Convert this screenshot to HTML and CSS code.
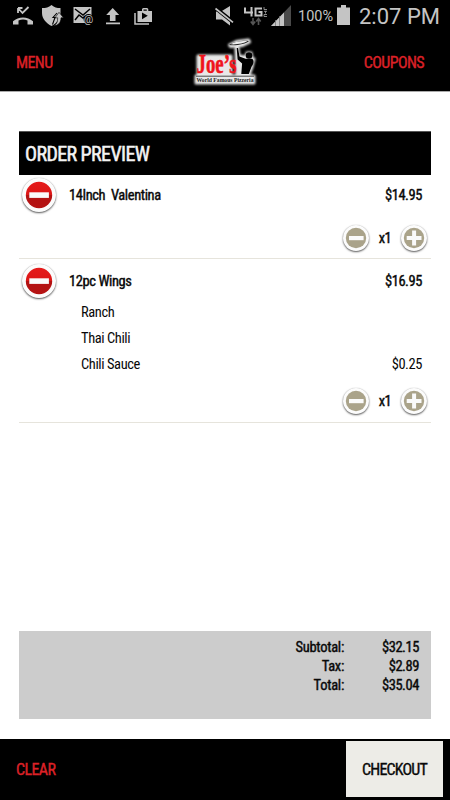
FILE: index.html
```html
<!DOCTYPE html>
<html lang="en">
<head>
<meta charset="utf-8">
<title>Joe's Order Preview</title>
<link rel="stylesheet" href="styles.css">
</head>
<body>
<svg class="defs" width="0" height="0">
  <defs>
    <linearGradient id="red" x1="0" y1="0" x2="0" y2="1">
      <stop offset="0" stop-color="#e51b1b"/><stop offset=".5" stop-color="#dc1616"/>
      <stop offset=".5" stop-color="#b31212"/><stop offset="1" stop-color="#b51212"/>
    </linearGradient>
    <symbol id="remove" viewBox="0 0 34 34">
      <circle cx="17" cy="17" r="13.2" fill="url(#red)"/>
      <rect x="7.3" y="14.3" width="19.6" height="5.6" fill="#fafafa"/>
    </symbol>
    <symbol id="minus" viewBox="0 0 26 26">
      <circle cx="13" cy="13" r="10.2" fill="#aaa38a"/>
      <rect x="6" y="11" width="14.6" height="4.2" fill="#fafafa"/>
    </symbol>
    <symbol id="plus" viewBox="0 0 26 26">
      <circle cx="13" cy="13" r="10.2" fill="#aaa38a"/>
      <path d="M11.1 5.5h4v5.6h5.4v4h-5.4v5.5h-4v-5.5H5.7v-4h5.4z" fill="#fafafa"/>
    </symbol>
  </defs>
</svg>

<div class="status">
  <svg class="status-left" width="160" height="32" viewBox="0 0 160 32" fill="#c4c4c4">
    <path d="M13 24.500v-3.200c5.500-5.200 14.500-5.200 20 0v3.200h-5.500v-4c-3-1.300-6-1.300-9 0v4z"/>
    <path d="M18 13V8m0 0h4.500M18 8l4.500 5 6-6" fill="none" stroke="#c4c4c4" stroke-width="1.800"/>
    <path d="M51.500 5c3 2.500 5 3 9 3v5c0 6-4 10.500-9 13-5-2.500-9.500-7-9.500-13V8c4 0 6.500-.5 9.500-3z"/>
    <path d="M53 25.800c3.500-1 4.700-3.500 4.700-8h-2.700l4-5.500 4.500 5.500h-2.500c0 5-3 8-8 8z" stroke="#000" stroke-width=".6"/>
    <path d="M57 13l-4 4.500h2l-2.500 7" fill="none" stroke="#000" stroke-width="1.100"/>
    <path d="M73.500 7h18v16h-18z"/>
    <path d="M75 9l8 6 7-6M75 20l4-5 4 3 2-2" fill="none" stroke="#000" stroke-width="1.500"/>
    <circle cx="88.500" cy="19" r="5" fill="#000"/>
    <text x="83.800" y="22.500" font-size="10.500" font-family="Roboto, sans-serif">@</text>
    <path d="M112.700 8l6.500 7h-3.700v6h-5.600v-6h-3.700zM106 22.500h14v1.800h-14z"/>
    <path d="M137.500 11H142V9.800c0-1 .6-1.800 1.500-1.800h3.300c1 0 1.500.8 1.500 1.800V11h3.700v11h-14.500zm6-0.200h3.300V9.500h-3.300z" fill-rule="evenodd"/>
    <path d="M142 12.500l5.800 3.300-5.800 3.500z" fill="#000"/>
    <path d="M135 13v11h14" fill="none" stroke="#c4c4c4" stroke-width="1.500"/>
  </svg>
  <svg class="status-right" width="80" height="32" viewBox="212 0 80 32" fill="#c4c4c4">
    <path d="M216 11.500h5l9-5.500v19.500l-8-6h-6z"/>
    <path d="M215.500 8l18 14.500" stroke="#000" stroke-width="4"/>
    <path d="M215.500 8.500l17.500 13.800" stroke="#c4c4c4" stroke-width="1.700"/>
    <path d="M245 7.500v5h8M251.500 7v9.500M262 8.500h-6.500v7h6v-3.500h-3" fill="none" stroke="#c4c4c4" stroke-width="2"/>
    <path d="M264 7v2.500h3M264 11.300h3M265.500 11.300v2.200M267 14.500h-3v2h3" fill="none" stroke="#aaa" stroke-width=".8"/>
    <path d="M253 18v6m-2.200-2.500l2.200 3 2.200-3M258.500 25v-6m-2.200 2.500l2.200-3 2.200 3" fill="none" stroke="#555" stroke-width="1.600"/>
    <path d="M291 5v21h-20z" fill="#4a4a4a"/>
    <path d="M271 26l13-13.500V26z"/>
    <path d="M275.500 20v6M279.500 16v10" stroke="#777" stroke-width=".8"/>
  </svg>
  <span class="percent">100%</span>
  <svg class="battery" width="13" height="21" viewBox="0 0 13 21"><path d="M4 0h5v2.500h4V20H0V2.500h4z" fill="#c4c4c4"/></svg>
  <span class="clock">2:07 PM</span>
</div>

<header class="nav">
  <span class="nav-link menu">MENU</span>
  <svg class="logo" width="66" height="50" viewBox="192 36 66 50">
    <g class="glow">
      <path d="M196 76h58v7h-58z"/>
      <path d="M229.500 45l7-3.500 12-1.500 1 2-7 3.500-12 1z"/>
      <path d="M198 56h33v18h-33zM236 48h2l1 8 7 1 1-4h4l1 5 2 1-2 8-3 8h-12z"/>
    </g>
    <path d="M229 45c4-3 14-5 20-4-3 3-13 5-20 4z" fill="#222"/>
    <path d="M230.500 44.300c5-2.800 11-3.600 17-3-4 2.200-10 3.400-17 3z" fill="#eee"/>
    <path d="M236.700 48h1.300l1.500 8.500 6 2.200h6.500c2 1 2.300 4.500-.5 8l-2.700 7.300h-7.500l.8-10.500-4.500-4z" fill="#000"/>
    <circle cx="249" cy="55.500" r="3.300" fill="#000"/>
    <text class="logo-name" x="196.500" y="73" textLength="40" lengthAdjust="spacingAndGlyphs">Joe’s</text>
    <path d="M196 76.200h58" stroke="#222" stroke-width=".8"/>
    <text class="logo-tag" x="196.500" y="82" textLength="57" lengthAdjust="spacingAndGlyphs">World Famous Pizzeria</text>
  </svg>
  <span class="nav-link coupons">COUPONS</span>
</header>

<main class="content">
  <h1 class="title"><span>ORDER PREVIEW</span></h1>
  <section class="item">
    <div class="row">
      <svg class="round remove"><use href="#remove"/></svg>
      <span class="name">14Inch&nbsp; Valentina</span><span class="price">$14.95</span>
    </div>
    <div class="qty">
      <svg class="round small"><use href="#minus"/></svg><span class="count">x1</span><svg class="round small"><use href="#plus"/></svg>
    </div>
  </section>
  <section class="item with-extras">
    <div class="row">
      <svg class="round remove"><use href="#remove"/></svg>
      <span class="name">12pc Wings</span><span class="price">$16.95</span>
    </div>
    <ul class="extras">
      <li><span>Ranch</span></li>
      <li><span>Thai Chili</span></li>
      <li><span>Chili Sauce</span><span>$0.25</span></li>
    </ul>
    <div class="qty">
      <svg class="round small"><use href="#minus"/></svg><span class="count">x1</span><svg class="round small"><use href="#plus"/></svg>
    </div>
  </section>
  <dl class="summary">
    <dt>Subtotal:</dt><dd>$32.15</dd>
    <dt>Tax:</dt><dd>$2.89</dd>
    <dt>Total:</dt><dd>$35.04</dd>
  </dl>
</main>

<footer class="footer">
  <span class="nav-link clear">CLEAR</span>
  <span class="checkout">CHECKOUT</span>
</footer>
</body>
</html>
```
FILE: styles.css
```css
* { box-sizing: border-box; margin: 0; padding: 0; }
body {
  width: 450px; height: 800px; overflow: hidden; background: #fff; color: #080808;
  display: flex; flex-direction: column;
  font-family: "Roboto Condensed", Roboto, sans-serif; font-stretch: condensed; font-weight: 400;
}
svg { display: block; flex: none; }
.defs { position: absolute; }
.status { height: 32px; flex: none; background: #000; color: #c4c4c4; display: flex; align-items: flex-start; font-family: Roboto, sans-serif; font-stretch: normal; }
.status-right { margin-left: 52px; }
.percent { width: 45px; padding: 8px 0 0 6px; font-size: 14.5px; line-height: 18px; }
.battery { margin-top: 5px; }
.clock { margin-left: 9px; padding-top: 3px; font-size: 22px; line-height: 27px; white-space: nowrap; }

.nav { height: 60px; flex: none; background: #000; border-bottom: 1px solid #aaa; display: flex; align-items: center; justify-content: space-between; padding: 2px 26px 0 16px; position: relative; }
.nav-link { color: #dc2127; font-size: 16px; line-height: 20px; letter-spacing: -.6px; -webkit-text-stroke: .4px currentColor; }
.logo { position: absolute; left: 192px; top: 4px; overflow: visible; }
.glow { fill: #e8e8e8; stroke: #e8e8e8; stroke-width: 3; stroke-linejoin: round; filter: blur(.9px); }
.logo-name { font: bold 27px "Liberation Serif", serif; fill: #f0141c; stroke: #f0141c; stroke-width: .6; }
.logo-tag { font: bold 6.5px "Liberation Serif", serif; fill: #222; }

.content { flex: 1; display: flex; flex-direction: column; padding: 39px 19px 20px; }
.title { height: 44px; flex: none; background: #000; border-top: 1px solid #555; color: #f4f4f4; font-size: 20px; font-weight: 400; line-height: 44px; padding-left: 6px; letter-spacing: -.6px; -webkit-text-stroke: .5px currentColor; }
.item { border-bottom: 1px solid #e6e4dc; }
.row { height: 43px; display: flex; align-items: flex-start; padding: 3px 9px 0 3px; }
.round { border-radius: 50%; background: #fcfcfc; box-shadow: 0 1px 2px rgba(0,0,0,.65), 0 0 1px rgba(0,0,0,.2); }
.remove { width: 34px; height: 34px; }
.small { width: 26px; height: 26px; }
.name, .price, .count, .summary { font-size: 14.5px; letter-spacing: -.42px; -webkit-text-stroke: .4px currentColor; }
.name, .price { line-height: 20px; margin-top: 8px; }
.name { margin-left: 13px; flex: 1; }
.qty { height: 40px; display: flex; align-items: flex-start; justify-content: flex-end; padding: 7px 4px 0 0; }
.count { width: 32px; text-align: center; line-height: 28px; }
.with-extras .row { padding-top: 5px; height: 44px; }
.with-extras .name, .with-extras .price { margin-top: 7px; padding-top: 1px; }
.with-extras .qty { height: 41px; }
.extras { list-style: none; padding: 0 9px 0 62px; }
.extras li { height: 26px; line-height: 18px; padding-top: 1px; font-size: 14.5px; letter-spacing: -.42px; display: flex; justify-content: space-between; }
.summary { height: 88px; flex: none; margin-top: auto; background: #ccc; padding: 7px 12px 0 0; display: grid; grid-template-columns: 1fr 75px; grid-auto-rows: 19px; text-align: right; line-height: 19px; }
.summary dt { letter-spacing: -.28px; }

.footer { height: 61px; flex: none; background: #000; display: flex; align-items: center; justify-content: space-between; padding: 0 7px 0 16px; }
.checkout { width: 97px; height: 56px; margin-bottom: 2px; background: #edece7; font-size: 16px; line-height: 57px; text-align: center; letter-spacing: -.8px; -webkit-text-stroke: .35px currentColor; }
```
